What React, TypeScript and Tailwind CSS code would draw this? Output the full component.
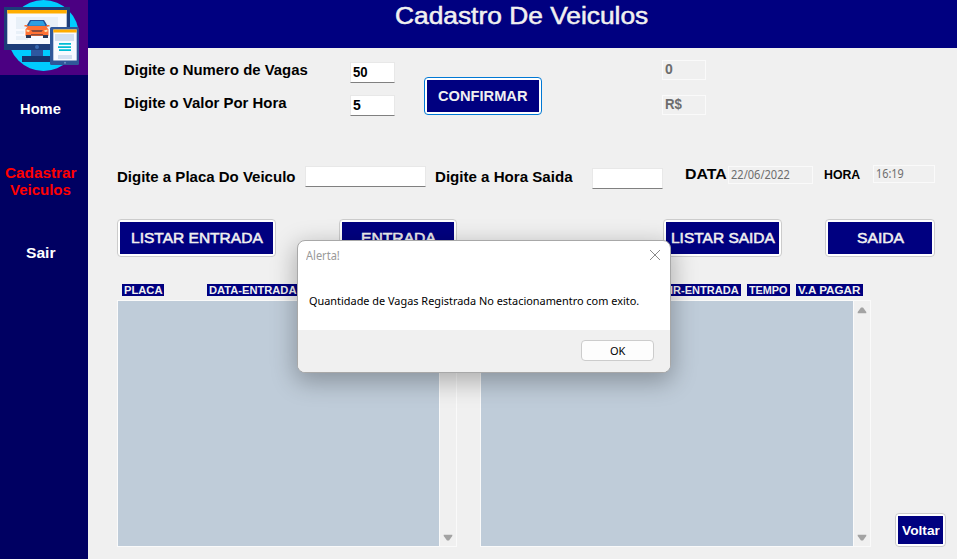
import { useLayoutEffect, useRef, useState } from 'react';
import type { ReactNode } from 'react';

/** Single line of text stretched horizontally to a fixed width. */
function Fit({ w, className = '', children }: { w: number; className?: string; children: ReactNode }) {
  const ref = useRef<HTMLSpanElement>(null);
  const [scale, setScale] = useState(1);
  useLayoutEffect(() => {
    if (ref.current) setScale(w / ref.current.offsetWidth);
  }, [w]);
  return (
    <span className={`block shrink-0 text-left whitespace-nowrap ${className}`} style={{ width: w }}>
      <span ref={ref} className="inline-block origin-left" style={{ transform: `scaleX(${scale})` }}>
        {children}
      </span>
    </span>
  );
}

function Btn({ className = '', focused = false, children }: { className?: string; focused?: boolean; children: ReactNode }) {
  return (
    <button
      className={`flex shrink-0 rounded-[4px] border bg-white p-[2px] ${focused ? 'border-[#0078d4]' : 'border-[#cccccc]'} ${className}`}
    >
      <span className="flex h-full w-full items-center justify-center bg-[#000080] text-[#f0f0f0]">{children}</span>
    </button>
  );
}

function Input({ className = '', children }: { className?: string; children?: ReactNode }) {
  return (
    <div
      className={`h-[21px] shrink-0 border border-[#e8e8e8] border-b-[#808080] bg-white pl-[2px] text-[14px] leading-[19px] font-bold ${className}`}
    >
      {children}
    </div>
  );
}

function Field({ className = '', children }: { className?: string; children: ReactNode }) {
  return <div className={`shrink-0 border border-[#fafafa] pl-[2px] text-[#6d6d6d] ${className}`}>{children}</div>;
}

function Tag({ w, className = '', children }: { w: number; className?: string; children: ReactNode }) {
  return (
    <div className={`h-[12px] shrink-0 bg-[#000080] pl-[2px] text-[10px] leading-[13px] font-bold text-[#f0f0f0] ${className}`}>
      <Fit w={w}>{children}</Fit>
    </div>
  );
}

function Arrow({ down = false }: { down?: boolean }) {
  return (
    <svg width="10" height="7" viewBox="0 0 10 7" className={down ? 'rotate-180' : ''}>
      <path d="M4 .5h2L9.3 5v1.2H.7V5z" fill="#a3a3a3" />
    </svg>
  );
}

function List({ className = '' }: { className?: string }) {
  return (
    <div className={`flex h-[247px] shrink-0 border border-[#fafafa] ${className}`}>
      <div className="flex-1 bg-[#bfccd9]" />
      <div className="flex w-[17px] flex-col items-center justify-between border-l border-[#fafafa] pt-[6px] pb-[5px]">
        <Arrow />
        <Arrow down />
      </div>
    </div>
  );
}

function Logo() {
  return (
    <svg width="88" height="75" viewBox="0 0 88 75" className="block shrink-0 bg-[#4b0082]">
      <circle cx="43.500" cy="35.500" r="35.500" fill="#00ccff" />
      <path d="M4 7h66v43H4z" fill="#1d3c79" />
      <path d="M7.300 10h59.400v34H7.300z" fill="#f7faff" />
      <path d="M7.300 10h59.400v3.600H7.300z" fill="#ffad00" />
      <path d="M16 17h42v12H16zM16 31h8v3h-8zM16 36h12v4H16z" fill="#e8f0f8" />
      <circle cx="37" cy="47" r="2" fill="#3868b0" />
      <path d="M31 50h12v6H31z" fill="#2d57a0" />
      <path d="M22 56h30v6H22z" fill="#17346d" />
      <path d="M30 20h14l4 6.500H26z" fill="#22529b" />
      <path d="M31 21h12l2.600 4.700H28.400z" fill="#2f9fe0" />
      <path d="M28 26h18l2.500 3.500V36h-23v-6.500z" fill="#ff7133" />
      <path d="M26 35h5v3h-5zM43 35h5v3h-5z" fill="#293958" />
      <path d="M31 30h12l-1.500 2h-9zM31 34h12v1.600H31z" fill="#8a4a3c" />
      <path d="M26.500 29.500l3.500 1-1 1.500-2.500-.5zM47.500 29.500l-3.500 1 1 1.500 2.500-.5z" fill="#ffe3b0" />
      <path d="M24.500 25h3v1.500h-3zM46.500 25h3v1.500h-3z" fill="#ff7133" />
      <rect x="50" y="27" width="29" height="38" rx="1.500" fill="#2f5799" />
      <path d="M53.300 29.500h23.400v31H53.300z" fill="#f7faff" />
      <path d="M53.300 29.500h23.400v3H53.300z" fill="#ffad00" />
      <path d="M55 34h19v7H55zM58 55h14v4H58z" fill="#d2e0f1" />
      <path d="M59 43h12v1.800H59zM58 46.200h13V48H58zM59 49.300h12v1.800H59z" fill="#00bcd4" />
      <circle cx="65" cy="62.700" r="1" fill="#6f91c8" />
    </svg>
  );
}

const heavy = '[-webkit-text-stroke:0.5px_currentColor]';

export default function App() {
  return (
    <div className="relative flex h-[559px] w-[957px] overflow-hidden bg-[#f0f0f0] font-['Liberation_Sans',Arial,sans-serif] text-black">
      <aside className="flex w-[88px] shrink-0 flex-col bg-[#000062] text-[14px] leading-[17px] font-bold text-white">
        <Logo />
        <Fit w={41} className="mt-[26px] ml-[20px]">Home</Fit>
        <Fit w={71} className="mt-[47px] ml-[5px] text-[#ff0000]">Cadastrar</Fit>
        <Fit w={61} className="ml-[10px] text-[#ff0000]">Veiculos</Fit>
        <Fit w={29} className="mt-[46px] ml-[26px]">Sair</Fit>
      </aside>

      <main className="flex flex-1 flex-col">
        <header className="flex h-[48px] shrink-0 bg-[#000080] pt-[3px] pl-[307px] text-[23px] leading-[26px] text-[#f0f0f0]">
          <Fit w={253} className={heavy}>Cadastro De Veiculos</Fit>
        </header>

        <section className="flex h-[117px] shrink-0 items-start">
          <div className="ml-[36px] flex w-[226px] flex-col gap-[16px] pt-[14px] text-[14px] leading-[17px] font-bold">
            <Fit w={184}>Digite o Numero de Vagas</Fit>
            <Fit w={162}>Digite o Valor Por Hora</Fit>
          </div>
          <div className="flex flex-col gap-[12px] pt-[14px]">
            <Input className="w-[45px]"><Fit w={15}>50</Fit></Input>
            <Input className="w-[45px]"><Fit w={8}>5</Fit></Input>
          </div>
          <Btn focused className="mt-[29px] ml-[29px] h-[38px] w-[118px]">
            <Fit w={90} className="pr-[1px] text-[14px] font-bold">CONFIRMAR</Fit>
          </Btn>
          <div className="ml-[120px] flex flex-col gap-[15px] pt-[12px] text-[14px] leading-[17px] font-bold">
            <Field className="h-[20px] w-[44px]"><Fit w={8}>0</Fit></Field>
            <Field className="h-[20px] w-[44px]"><Fit w={17}>R$</Fit></Field>
          </div>
        </section>

        <section className="flex h-[54px] shrink-0 items-start text-[14px] leading-[17px] font-bold">
          <Fit w={179} className="mt-[4px] ml-[29px]">Digite a Placa Do Veiculo</Fit>
          <Input className="mt-px ml-[9px] w-[121px]" />
          <Fit w={138} className="mt-[4px] ml-[9px]">Digite a Hora Saida</Fit>
          <Input className="mt-[3px] ml-[19px] w-[71px]" />
          <Fit w={42} className="mt-px ml-[22px]">DATA</Fit>
          <Field className="mt-px ml-[1px] h-[18px] w-[85px] text-[12px] leading-[16px] font-normal">
            <Fit w={59} className="font-['Noto_Sans',sans-serif]">22/06/2022</Fit>
          </Field>
          <Fit w={36} className="mt-px ml-[11px] text-[13px]">HORA</Fit>
          <Field className="ml-[13px] h-[18px] w-[62px] text-[12px] leading-[16px] font-normal">
            <Fit w={28} className="font-['Noto_Sans',sans-serif]">16:19</Fit>
          </Field>
        </section>

        <section className="flex h-[65px] shrink-0 items-start pl-[29px] text-[14px]">
          <Btn className="h-[38px] w-[159px]"><Fit w={132} className={heavy}>LISTAR ENTRADA</Fit></Btn>
          <Btn className="ml-[63px] h-[38px] w-[118px]"><Fit w={75} className={heavy}>ENTRADA</Fit></Btn>
          <Btn className="ml-[206px] h-[38px] w-[119px]"><Fit w={104} className={heavy}>LISTAR SAIDA</Fit></Btn>
          <Btn className="ml-[43px] h-[38px] w-[110px]"><Fit w={47} className={heavy}>SAIDA</Fit></Btn>
        </section>

        <section className="flex h-[16px] shrink-0 items-start pl-[34px]">
          <Tag w={38} className="w-[42px]">PLACA</Tag>
          <Tag w={88} className="ml-[43px] w-[93px]">DATA-ENTRADA</Tag>
          <Tag w={74} className="ml-[363px] w-[78px]">HR-ENTRADA</Tag>
          <Tag w={39} className="ml-[6px] w-[43px]">TEMPO</Tag>
          <Tag w={63} className="ml-[6px] w-[67px]">V.A PAGAR</Tag>
        </section>

        <section className="flex items-start pl-[29px]">
          <List className="w-[340px]" />
          <List className="ml-[23px] w-[391px]" />
          <Btn className="mt-[213px] ml-[24px] h-[34px] w-[51px]">
            <Fit w={38} className="pt-[2px] text-[13px] font-bold text-white">Voltar</Fit>
          </Btn>
        </section>
      </main>

      <div
        role="dialog"
        className="absolute top-[240px] left-[297px] flex h-[133px] w-[374px] flex-col overflow-hidden rounded-[8px] border border-[#a8a8a8] bg-white font-['Noto_Sans',sans-serif] shadow-[0_7px_24px_2px_rgba(0,0,0,0.28)]"
      >
        <div className="flex h-[89px] shrink-0 flex-col">
          <div className="flex items-start justify-between pr-[9px] pl-[8px]">
            <Fit w={34} className="mt-[7px] text-[12px] leading-[16px] text-[#999999]">Alerta!</Fit>
            <svg width="12" height="12" viewBox="0 0 12 12" className="mt-[8px]">
              <path d="M1 1l10 10M11 1L1 11" stroke="#8a8a8a" strokeWidth="1" fill="none" />
            </svg>
          </div>
          <Fit w={330} className="mt-[29px] ml-[11px] text-[11px] leading-[16px]">
            Quantidade de Vagas Registrada No estacionamentro com exito.
          </Fit>
        </div>
        <div className="flex flex-1 items-start justify-end bg-[#f0f0f0] pt-[10px] pr-[16px]">
          <button className="flex h-[21px] w-[73px] items-center justify-center rounded-[4px] border border-[#cccccc] bg-[#fdfdfd] text-[11px] leading-[16px]">
            <Fit w={15}>OK</Fit>
          </button>
        </div>
      </div>
    </div>
  );
}
